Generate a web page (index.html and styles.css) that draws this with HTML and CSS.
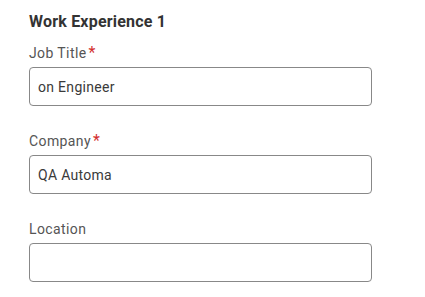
FILE: index.html
```html
<!DOCTYPE html>
<html>
<head>
    <meta charset="utf-8">
    <meta name="viewport" content="width=device-width, initial-scale=1.0">
    <link rel="stylesheet" href="styles.css">
</head>
<body>
    <div class="section">
        <div class="section-title">Work Experience 1</div>

        <div class="field">
            <label class="field-label" for="jobTitle">Job Title<span class="required">*</span></label>
            <input class="field-input" id="jobTitle" type="text" value="on Engineer">
        </div>

        <div class="field">
            <label class="field-label" for="company">Company<span class="required">*</span></label>
            <input class="field-input" id="company" type="text" value="QA Automa">
        </div>

        <div class="field">
            <label class="field-label" for="location">Location</label>
            <input class="field-input" id="location" type="text" value="">
        </div>
    </div>
</body>
</html>
```

FILE: styles.css
```css
body {
    margin: 0;
    background: #ffffff;
    font-family: Roboto, 'Liberation Sans', sans-serif;
    color: #333;
}

.section {
    width: 343px;
    padding: 11px 0 0 29px;
}

.section-title {
    font-size: 16px;
    font-weight: bold;
    color: #333;
    line-height: 22px;
    letter-spacing: 0.2px;
    margin-bottom: 11px;
}

.field {
    display: flex;
    flex-direction: column;
    margin-bottom: 26px;
}

.field-label {
    font-size: 14px;
    color: #555;
    line-height: 18px;
    margin-bottom: 5px;
    letter-spacing: 0.4px;
}

.required {
    color: #d32f2f;
    font-size: 16px;
    margin-left: 2px;
}

.field-input {
    box-sizing: border-box;
    width: 343px;
    height: 39px;
    border: 1px solid #888;
    border-radius: 4px;
    padding: 0 8px;
    font-family: Roboto, 'Liberation Sans', sans-serif;
    font-size: 14px;
    letter-spacing: 0.3px;
    color: #3a3a3a;
    background: #fff;
    outline: none;
}
```
